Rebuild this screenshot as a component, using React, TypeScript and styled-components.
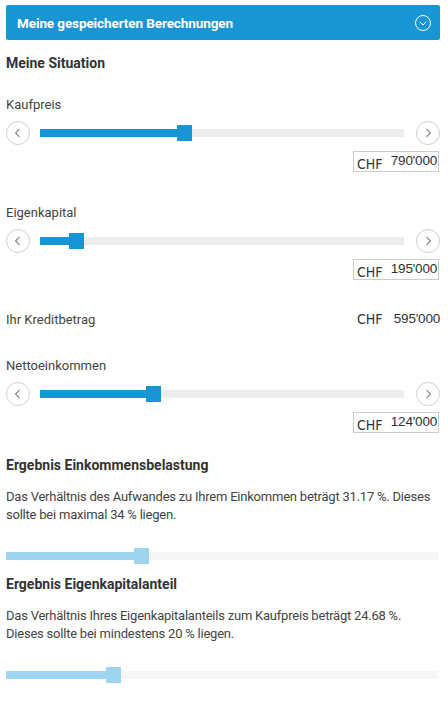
import { FC } from 'react';
import styled, { createGlobalStyle } from 'styled-components';

const BLUE = '#1896d4';
const LIGHT_BLUE = '#9fd4ee';

const GlobalStyle = createGlobalStyle`
	body {
		margin: 0;
		background: #fff;
		font-family: Roboto, 'Liberation Sans', sans-serif;
		color: #444;
	}
`;

type SliderProps = { label: string; pos: number; value: string; top: number };

const Chevron: FC<{ dir: 'left' | 'right' | 'down'; color: string; size: number }> = ({ dir, color, size }) => {
	const d = dir === 'left' ? 'M6 2 L3 5 L6 8' : dir === 'right' ? 'M4 2 L7 5 L4 8' : 'M2 4 L5 7 L8 4';
	return (
		<svg width={size} height={size} viewBox="0 0 10 10">
			<path d={d} fill="none" stroke={color} strokeWidth={1} strokeLinecap="round" strokeLinejoin="round" />
		</svg>
	);
};

const SliderField: FC<SliderProps> = ({ label, pos, value, top }) => (
	<Field $top={top}>
		<Label>{label}</Label>
		<SliderRow>
			<RoundButton>
				<Chevron dir="left" color="#888" size={12} />
			</RoundButton>
			<Track>
				<Fill style={{ width: `calc(${pos}% + 7px)` }} />
				<Thumb style={{ left: `${pos}%` }} />
			</Track>
			<RoundButton>
				<Chevron dir="right" color="#888" size={12} />
			</RoundButton>
		</SliderRow>
		<ValueBox>
			<Currency>CHF</Currency>
			<Amount>{value}</Amount>
		</ValueBox>
	</Field>
);

const ResultBar: FC<{ pos: number }> = ({ pos }) => (
	<ResultTrack>
		<ResultFill style={{ width: `calc(${pos}% + 7px)` }} />
		<ResultThumb style={{ left: `${pos}%` }} />
	</ResultTrack>
);

export default function App() {
	return (
		<>
			<GlobalStyle />
			<Page>
				<Header>
					<HeaderTitle>Meine gespeicherten Berechnungen</HeaderTitle>
					<HeaderIcon>
						<Chevron dir="down" color="#fff" size={10} />
					</HeaderIcon>
				</Header>
				<SectionTitle $top={13}>Meine Situation</SectionTitle>
				<SliderField label="Kaufpreis" pos={37.6} value="790'000" top={23} />
				<SliderField label="Eigenkapital" pos={8} value="195'000" top={32} />
				<CreditRow>
					<CreditLabel>Ihr Kreditbetrag</CreditLabel>
					<CreditValue>
						<Currency>CHF</Currency>
						<Amount>595'000</Amount>
					</CreditValue>
				</CreditRow>
				<SliderField label="Nettoeinkommen" pos={29.1} value="124'000" top={29} />
				<SectionTitle $top={22}>Ergebnis Einkommensbelastung</SectionTitle>
				<Paragraph>
					Das Verhältnis des Aufwandes zu Ihrem Einkommen beträgt 31.17 %. Dieses sollte bei maximal 34 %
					liegen.
				</Paragraph>
				<ResultBar pos={29.6} />
				<SectionTitle $top={14}>Ergebnis Eigenkapitalanteil</SectionTitle>
				<Paragraph>
					Das Verhältnis Ihres Eigenkapitalanteils zum Kaufpreis beträgt 24.68 %. Dieses sollte bei mindestens
					20 % liegen.
				</Paragraph>
				<ResultBar pos={23.1} />
			</Page>
		</>
	);
}

const Page = styled.div`
	width: 448px;
	box-sizing: border-box;
	padding: 5px 8px 40px 6px;
	display: flex;
	flex-direction: column;
`;

const Header = styled.div`
	height: 35px;
	background: ${BLUE};
	border-radius: 2px;
	display: flex;
	align-items: center;
	justify-content: space-between;
	padding: 0 9px 0 11px;
`;

const HeaderTitle = styled.div`
	color: #fff;
	font-weight: 700;
	font-size: 13.5px;
	letter-spacing: -0.1px;
`;

const HeaderIcon = styled.div`
	width: 14px;
	height: 14px;
	border: 1px solid #fff;
	border-radius: 50%;
	display: flex;
	align-items: center;
	justify-content: center;
`;

const SectionTitle = styled.div<{ $top: number }>`
	margin-top: ${(p) => p.$top}px;
	font-size: 14px;
	line-height: 20px;
	font-weight: 700;
	color: #333;
`;

const Field = styled.div<{ $top: number }>`
	margin-top: ${(p) => p.$top}px;
	display: flex;
	flex-direction: column;
`;

const Label = styled.div`
	font-size: 13px;
	line-height: 18px;
	color: #444;
`;

const SliderRow = styled.div`
	margin-top: 7px;
	display: flex;
	align-items: center;
	height: 24px;
`;

const RoundButton = styled.div`
	width: 22px;
	height: 22px;
	flex: none;
	border: 1px solid #d0d0d0;
	border-radius: 50%;
	display: flex;
	align-items: center;
	justify-content: center;
`;

const Track = styled.div`
	position: relative;
	flex: 1;
	height: 8px;
	margin: 0 12px 0 10px;
	background: #ededed;
`;

const Fill = styled.div`
	height: 100%;
	background: ${BLUE};
`;

const Thumb = styled.div`
	position: absolute;
	top: -4px;
	width: 15px;
	height: 16px;
	background: ${BLUE};
`;

const ValueBox = styled.div`
	align-self: flex-end;
	margin: 6px 1px 0 0;
	width: 86px;
	height: 21px;
	box-sizing: border-box;
	border: 1px solid #ccc;
	display: flex;
	justify-content: space-between;
	align-items: flex-start;
	padding: 0 1px 0 3px;
`;

const Currency = styled.span`
	font-family: 'DejaVu Sans Condensed', 'DejaVu Sans', sans-serif;
	font-stretch: condensed;
	font-size: 14px;
	line-height: 16px;
	padding-top: 4px;
	color: #333;
`;

const Amount = styled.span`
	font-family: 'Liberation Sans', Arial, sans-serif;
	font-size: 13.5px;
	line-height: 16px;
	letter-spacing: -0.2px;
	padding-top: 1px;
	color: #2f2f3a;
`;

const CreditRow = styled.div`
	margin-top: 30px;
	display: flex;
	justify-content: space-between;
	align-items: center;
	height: 18px;
`;

const CreditLabel = styled.div`
	font-size: 13px;
	color: #444;
`;

const CreditValue = styled.div`
	width: 86px;
	display: flex;
	justify-content: space-between;
	padding-left: 3px;
	box-sizing: border-box;
	& > span {
		padding-top: 0;
	}
`;

const Paragraph = styled.p`
	margin: 13px 0 0;
	font-size: 13px;
	line-height: 17.5px;
	letter-spacing: -0.22px;
	color: #444;
`;

const ResultTrack = styled.div`
	position: relative;
	margin: 29px 2px 0 0;
	height: 8px;
	background: #f6f6f6;
`;

const ResultFill = styled.div`
	height: 100%;
	background: ${LIGHT_BLUE};
`;

const ResultThumb = styled.div`
	position: absolute;
	top: -4px;
	width: 15px;
	height: 16px;
	background: ${LIGHT_BLUE};
`;
